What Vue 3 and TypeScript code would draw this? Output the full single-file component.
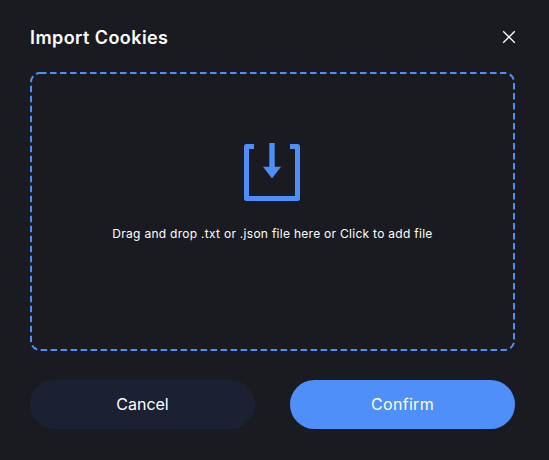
<script setup lang="ts">
const title: string = 'Import Cookies'
</script>

<template>
  <div class="dialog">
    <header class="head">
      <h1 class="title">{{ title }}</h1>
      <button class="close" aria-label="Close">
        <svg width="14" height="14" viewBox="0 0 14 14" fill="none">
          <path d="M1.2 1.2 12.8 12.8M12.8 1.2 1.2 12.8" stroke="#fff" stroke-width="1.3" />
        </svg>
      </button>
    </header>
    <section class="drop">
      <svg class="dash" width="485" height="279" viewBox="0 0 485 279" fill="none">
        <rect x="1" y="1" width="483" height="277" rx="9" stroke="#4f8ffa" stroke-width="2" stroke-dasharray="6.5 3.5" />
      </svg>
      <svg class="icon" width="57" height="60" viewBox="0 0 57 60" fill="none">
        <path d="M10 3.5H2.5V55.5H53.5V3.5H46" stroke="#4f8ffa" stroke-width="5" stroke-linejoin="round" />
        <path d="M28 0V25" stroke="#4f8ffa" stroke-width="5.4" />
        <path d="M19 23.7H37L28 35.5Z" fill="#4f8ffa" />
      </svg>
      <p class="hint">Drag and drop .txt or .json file here or Click to add file</p>
    </section>
    <footer class="actions">
      <button class="btn cancel">Cancel</button>
      <button class="btn confirm">Confirm</button>
    </footer>
  </div>
</template>

<style>
html, body { margin: 0; background: #1a1b20; }
</style>

<style scoped>
.dialog {
  width: 549px;
  height: 460px;
  box-sizing: border-box;
  padding: 20px 32px 31px 30px;
  background: #1a1b20;
  display: flex;
  flex-direction: column;
  font-family: "Inter", "Liberation Sans", sans-serif;
  color: #fff;
}
.head {
  display: flex;
  align-items: center;
  justify-content: space-between;
  height: 34px;
}
.title {
  margin: 0;
  font-size: 18px;
  font-weight: 600;
  letter-spacing: 0.43px;
}
.close {
  width: 16px;
  height: 16px;
  padding: 0;
  border: 0;
  background: none;
  display: flex;
  align-items: center;
  justify-content: center;
}
.drop {
  position: relative;
  margin-top: 18px;
  width: 485px;
  height: 279px;
  box-sizing: border-box;
  padding-top: 71px;
  display: flex;
  flex-direction: column;
  align-items: center;
}
.dash { position: absolute; left: 0; top: 0; }
.hint {
  margin: 23px 0 0;
  font-size: 12px;
  line-height: 16px;
  letter-spacing: 0.28px;
}
.actions {
  display: flex;
  justify-content: space-between;
  width: 485px;
  margin-top: 29px;
}
.btn {
  width: 225px;
  height: 49px;
  padding: 0 0 2px;
  border: 0;
  border-radius: 25px;
  color: #fff;
  font-family: inherit;
  font-size: 16px;
}
.cancel { background: #1b2133; }
.confirm { background: #4f8ffa; letter-spacing: 0.3px; }
</style>
